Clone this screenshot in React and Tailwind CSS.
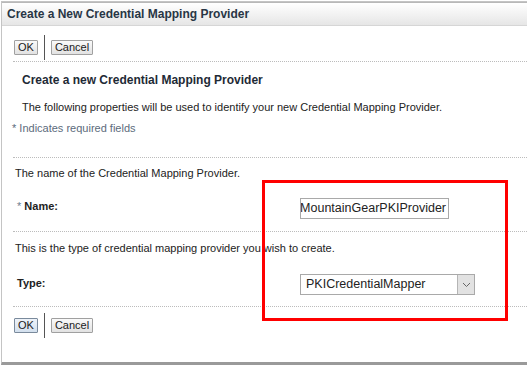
const font = { fontFamily: '"Liberation Sans", Arial, sans-serif' };

const Btn = ({ children, active }) => (
  <button
    className={
      'h-[15px] px-[3px] text-[11px] leading-[13px] text-[#1a1a1a] border rounded-[1px] ' +
      (active
        ? 'border-[#7a8a9c] bg-gradient-to-b from-[#eef3f9] to-[#d3e0ee]'
        : 'border-[#a0a0a0] bg-gradient-to-b from-[#fafafa] to-[#e2e2e2]')
    }
  >
    {children}
  </button>
);

const ButtonBar = ({ active }) => (
  <div className="flex items-center h-[25px] pl-[12px]">
    <Btn active={active}>OK</Btn>
    <div className="w-px h-[25px] bg-[#555] mx-[6px]" />
    <Btn>Cancel</Btn>
  </div>
);

const Dotted = ({ left = 11 }) => (
  <div className="h-px border-t border-dotted border-[#bcbcbc]" style={{ marginLeft: left }} />
);

export default function App() {
  return (
    <div className="w-[527px] h-[367px] bg-white overflow-hidden relative text-[11px] leading-[13px] text-[#222]" style={font}>
      <div className="ml-[1px] mt-[1px] h-[364px] border-l border-t border-[#c4c4c4] border-b-[3px] border-b-[#9a9a9a] flex flex-col">
        <div className="h-[24px] shrink-0 flex items-center pl-[5px] bg-gradient-to-b from-[#ffffff] to-[#e6e6e6] border-b border-[#d6d6d6] border-t border-t-[#b8b8b8]">
          <span className="font-bold text-[12px] text-[#283645]">Create a New Credential Mapping Provider</span>
        </div>
        <div className="pt-[9px] pb-[1px]">
          <ButtonBar />
        </div>
        <Dotted />
        <div className="pl-[20px] pt-[11px] h-[25px] font-bold text-[12px] leading-[14px] text-[#1e2a36]">Create a new Credential Mapping Provider</div>
        <div className="pl-[20px] pt-[14px] h-[27px]">The following properties will be used to identify your new Credential Mapping Provider.</div>
        <div className="pl-[10px] pt-[8px] h-[21px] text-[#5c6b7c]">* Indicates required fields</div>
        <div className="h-[22px]" />
        <Dotted />
        <div className="pl-[13px] pt-[9px] h-[22px]">The name of the Credential Mapping Provider.</div>
        <div className="flex items-start h-[51px] pt-[18px]">
          <div className="w-[298px] pl-[15px] pt-[2px] font-bold">
            <span className="text-[#6d7d8e] font-normal">* </span>Name:
          </div>
          <div className="w-[149px] h-[21px] border border-[#a9a9a9] overflow-hidden flex items-center justify-end pr-[2px]">
            <span className="whitespace-nowrap shrink-0 text-[12.5px] leading-[15px]">MountainGearPKIProvider</span>
          </div>
        </div>
        <Dotted />
        <div className="pl-[13px] pt-[10px] h-[23px]">This is the type of credential mapping provider you wish to create.</div>
        <div className="flex items-start h-[51px] pt-[19px]">
          <div className="w-[298px] pl-[15px] pt-[3px] font-bold">Type:</div>
          <div className="w-[175px] h-[21px] border border-[#a9a9a9] flex items-center">
            <span className="flex-1 pl-[5px] text-[12.5px] leading-[15px]">PKICredentialMapper</span>
            <div className="w-[17px] h-[19px] bg-[#e2e2e2] border-l border-[#b5b5b5] flex items-center justify-center">
              <svg width="9" height="6" viewBox="0 0 9 6">
                <path d="M1 1l3.5 3.5L8 1" fill="none" stroke="#666" strokeWidth="1" />
              </svg>
            </div>
          </div>
        </div>
        <Dotted />
        <div className="pt-[6px]">
          <ButtonBar active />
        </div>
      </div>
      <div className="absolute left-[262px] top-[180px] w-[246px] h-[141px] border-[3px] border-[#ff0000]" />
    </div>
  );
}
